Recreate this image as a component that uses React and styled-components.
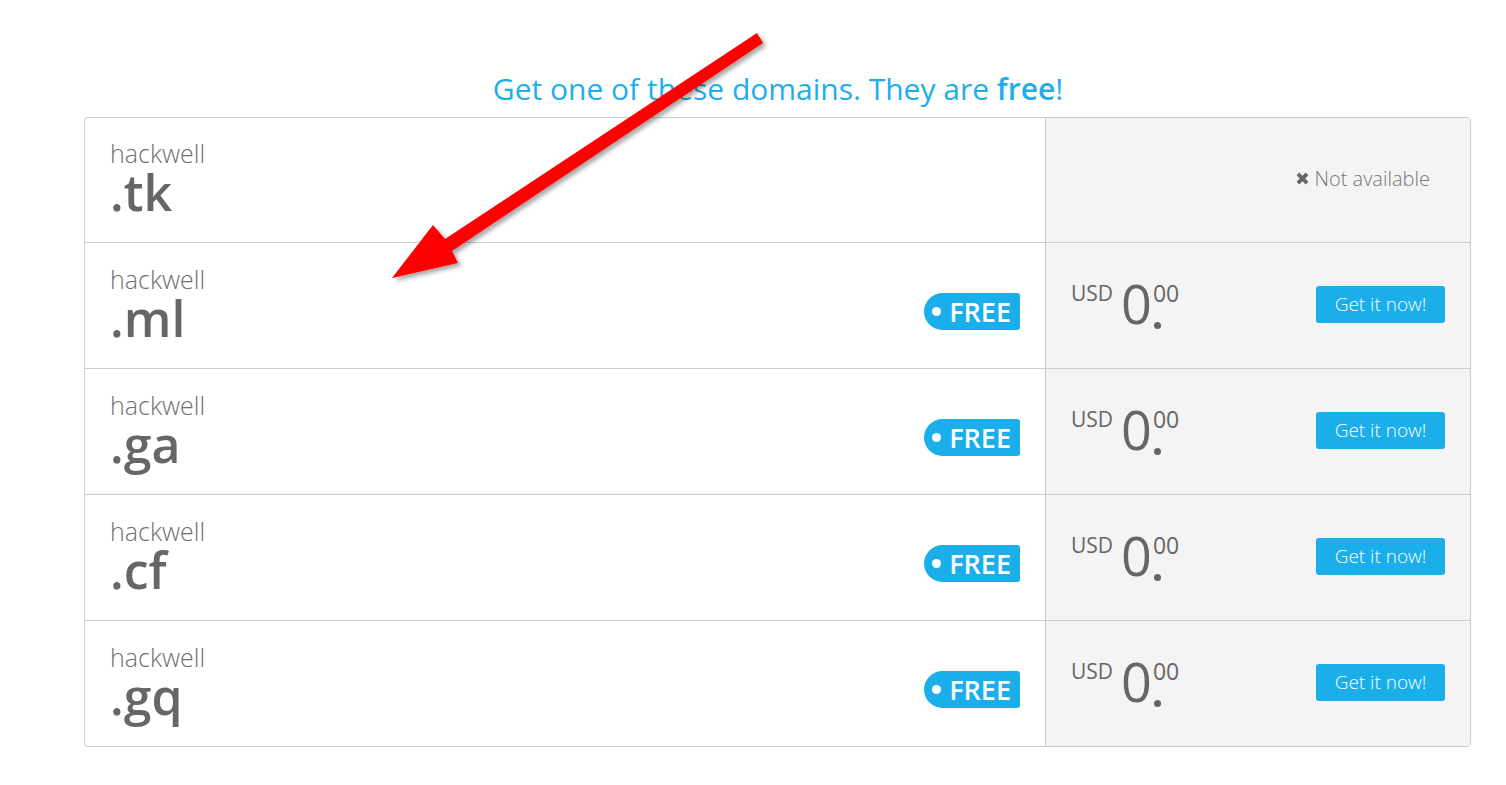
import React from 'react';
import styled, { createGlobalStyle } from 'styled-components';

const GlobalStyle = createGlobalStyle`
    body {
        margin: 0;
        background: #ffffff;
        font-family: "Open Sans", "Liberation Sans", sans-serif;
    }
`;

const domains = [
    { tld: '.tk', available: false },
    { tld: '.ml', available: true },
    { tld: '.ga', available: true },
    { tld: '.cf', available: true },
    { tld: '.gq', available: true },
];

function App() {
    return (
        <Page>
            <GlobalStyle />
            <Title>
                Get one of these domains. They are <strong>free</strong>!
            </Title>
            <Table>
                {domains.map((d, i) => (
                    <Row key={d.tld} $first={i === 0}>
                        <NameCell>
                            <NameBlock>
                                <Host>hackwell</Host>
                                <Tld>{d.tld}</Tld>
                            </NameBlock>
                            {d.available && (
                                <FreeBadge>
                                    <span className="dot" />
                                    FREE
                                </FreeBadge>
                            )}
                        </NameCell>
                        <PriceCell $available={d.available}>
                            {d.available ? (
                                <>
                                    <Price>
                                        <span className="cur">USD</span>
                                        <span className="int">0</span>
                                        <span className="dec">
                                            <sup>00</sup>
                                        </span>
                                    </Price>
                                    <GetButton>Get it now!</GetButton>
                                </>
                            ) : (
                                <NotAvailable>
                                    <svg width="15" height="15" viewBox="0 0 14 14">
                                        <path d="M1.5 4 L4 1.5 L7 4.5 L10 1.5 L12.5 4 L9.5 7 L12.5 10 L10 12.5 L7 9.5 L4 12.5 L1.5 10 L4.5 7 Z" fill="#666" />
                                    </svg>
                                    Not available
                                </NotAvailable>
                            )}
                        </PriceCell>
                    </Row>
                ))}
            </Table>
            <Arrow viewBox="0 0 1506 785" width="1506" height="785">
                <defs>
                    <filter id="shadow" x="-20%" y="-20%" width="140%" height="140%">
                        <feDropShadow dx="3" dy="3" stdDeviation="2" floodColor="#000" floodOpacity="0.35" />
                    </filter>
                </defs>
                <polygon
                    points="757,33 763,43 452,251 458,263 392,278 433,225 445,239"
                    fill="#ff0000"
                    filter="url(#shadow)"
                />
            </Arrow>
        </Page>
    );
}

const Page = styled.div`
    position: relative;
    width: 1506px;
    height: 785px;
    padding-top: 69px;
    box-sizing: border-box;
`;

const Title = styled.h2`
    margin: 0 0 0 85px;
    width: 1386px;
    text-align: center;
    font-size: 30px;
    font-weight: 400;
    line-height: 40px;
    color: #1eaeea;
    padding-bottom: 8px;
    strong {
        font-weight: 600;
    }
`;

const Table = styled.div`
    box-sizing: border-box;
    margin-left: 84px;
    width: 1387px;
    border: 1px solid #cccccc;
    border-radius: 4px;
    overflow: hidden;
`;

const Row = styled.div`
    display: grid;
    grid-template-columns: 961px 1fr;
    height: ${p => (p.$first ? '124px' : '125px')};
    border-top: ${p => (p.$first ? 'none' : '1px solid #cccccc')};
`;

const NameCell = styled.div`
    display: flex;
    justify-content: space-between;
    align-items: center;
    padding: 0 25px 0 25px;
    border-right: 1px solid #cccccc;
    color: #666666;
`;

const NameBlock = styled.div`
    margin-top: -4px;
`;

const Host = styled.div`
    font-size: 25px;
    font-weight: 300;
    line-height: 28px;
    color: #707070;
`;

const Tld = styled.div`
    font-size: 50px;
    font-weight: 600;
    line-height: 50px;
`;

const FreeBadge = styled.div`
    display: flex;
    align-items: center;
    gap: 8px;
    height: 37px;
    margin-top: 12px;
    padding: 0 9px 0 8px;
    background: #1aaeea;
    color: #ffffff;
    font-size: 27px;
    font-weight: 600;
    border-radius: 19px 3px 3px 19px;
    .dot {
        width: 9px;
        height: 9px;
        border-radius: 50%;
        background: #ffffff;
    }
`;

const PriceCell = styled.div`
    display: flex;
    align-items: center;
    justify-content: ${p => (p.$available ? 'space-between' : 'flex-end')};
    background: #f4f4f4;
    padding: 0 25px 0 25px;
`;

const Price = styled.div`
    display: flex;
    align-items: flex-start;
    color: #666666;
    .cur {
        font-size: 21px;
        font-weight: 500;
        line-height: 24px;
        margin-top: -1px;
        margin-right: 8px;
    }
    .int {
        font-size: 54px;
        font-weight: 500;
        line-height: 54px;
        margin-top: -6px;
    }
    .dec {
        position: relative;
        width: 28px;
        height: 48px;
        margin-left: 1px;
        &::after {
            content: '';
            position: absolute;
            left: 1px;
            top: 40px;
            width: 7px;
            height: 7px;
            border-radius: 50%;
            background: #666666;
        }
        sup {
            position: absolute;
            left: 0;
            top: 0;
            font-size: 23px;
            font-weight: 500;
            line-height: 22px;
            vertical-align: baseline;
        }
    }
`;

const GetButton = styled.button`
    height: 37px;
    width: 129px;
    border: none;
    border-radius: 3px;
    background: #1aaeea;
    color: #ffffff;
    font-family: "Open Sans", "Liberation Sans", sans-serif;
    font-size: 19px;
    font-weight: 300;
    padding: 0;
    margin-top: -3px;
`;

const NotAvailable = styled.div`
    display: flex;
    align-items: center;
    gap: 5px;
    color: #777777;
    font-size: 20px;
    font-weight: 300;
    margin-right: 15px;
    margin-top: -4px;
`;

const Arrow = styled.svg`
    position: absolute;
    left: 0;
    top: 0;
    pointer-events: none;
`;

export default App;
